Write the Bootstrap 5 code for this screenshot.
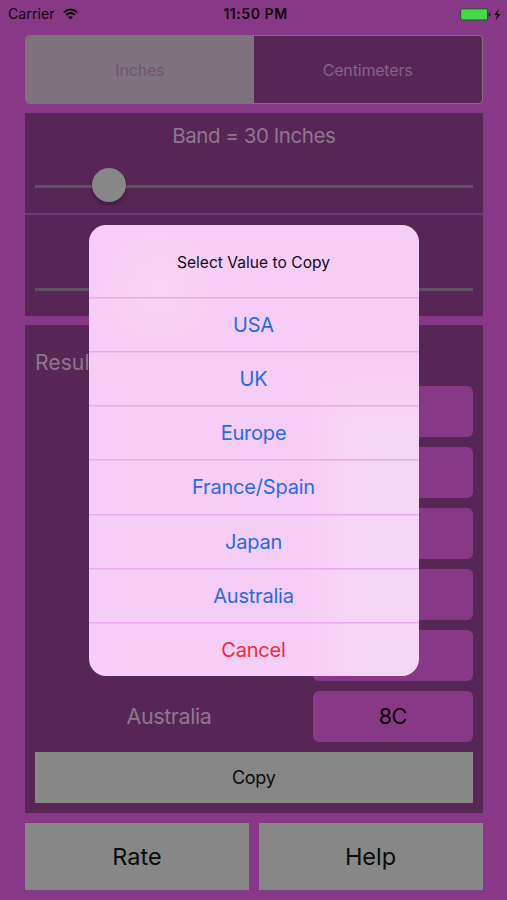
<!DOCTYPE html>
<html lang="en">
<head>
<meta charset="utf-8">
<meta name="viewport" content="width=device-width, initial-scale=1">
<title>Size Converter</title>
<link href="https://cdn.jsdelivr.net/npm/bootstrap@5.3.0/dist/css/bootstrap.min.css" rel="stylesheet">
<style>
  html, body { height: 900px; overflow: hidden; }
  body { background: #873886; font-family: Inter, "Liberation Sans", sans-serif; color: #8f768f; }
  .screen { height: 900px; }
  .status { height: 35px; padding: 0 6px 7px 8px; color: #10040f; font-size: 14.2px; line-height: 28px; }
  .status > div { flex: 1 1 0; }
  .clock { font-weight: 600; font-size: 14px; letter-spacing: .55px; padding-left: 2px; }
  .content { padding: 0 25px; width: 507.5px; }
  .segments { height: 69px; border: 1px solid #7e727f; border-radius: 4px; background: #582656; overflow: hidden; font-size: 16px; letter-spacing: -.18px; }
  .segments .chosen { background: #7e727f; color: #6f536f; }
  .segments .other { color: #846384; }
  .panel { background: #582656; }
  .measures { height: 203.5px; margin-top: 8.5px; }
  .measure { height: 100.5px; padding: 8px 10px 0; }
  .measure + .measure { border-top: 2px solid #76367a; height: 103px; }
  .measure-title { font-size: 20.5px; letter-spacing: -.45px; line-height: 30px; height: 30px; }
  .slide { height: 34px; margin-top: 17.5px; }
  .rail { height: 3px; background: #615262; margin-top: 3px; }
  .knob { width: 34px; height: 34px; border-radius: 50%; background: #868786; box-shadow: 0 3px 4px rgba(0,0,0,.3); margin-right: -34px; margin-left: 56.5px; z-index: 1; }
  .knob + .rail { margin-left: -56.5px; }
  .results { height: 487.5px; margin-top: 9px; padding: 21px 10px 9.5px 10px; }
  .results-title { font-size: 21.2px; line-height: 32px; height: 40px; }
  .result { height: 50.6px; margin-bottom: 10.4px; font-size: 21.5px; letter-spacing: -.4px; }
  .result-label { width: 278px; padding-right: 10px; }
  .result-value { width: 159.5px; border-radius: 6px; background: #873886; color: #0b020b; }
  .flat, .flat:hover { background: #868786; color: #0b0b0b; border: 0; border-radius: 0; padding: 0; }
  .copy { height: 51px; font-size: 18px; letter-spacing: -.3px; }
  .footer-row { height: 67.5px; margin-top: 10px; gap: 9.5px; }
  .footer-row .flat { font-size: 23.5px; flex: 1 1 0; }
  .dialog-layer { z-index: 5; padding-top: 1px; }
  .sheet { width: 330px; height: 451px; border-radius: 17px; overflow: hidden;
    background:
      radial-gradient(circle at 70px 62px, rgba(248,216,242,.8), rgba(248,216,242,0) 60px),
      linear-gradient(90deg, #f6cdf7 215px, rgba(246,205,247,0) 265px),
      linear-gradient(#f6cdf7 145px, #f7d6f5 200px); }
  .sheet-title { height: 72px; flex: none; color: #160717; font-size: 15.6px; padding-top: 3px; }
  .sheet .choice { height: 54.15px; background: transparent; color: #266bee; border: 0; box-shadow: inset 0 1.4px 0 #e9a9eb; font-size: 20px; letter-spacing: -.2px; padding: 2px 0 0; }
  .sheet .choice.stop { color: #f02a3b; }
</style>
<script src="https://cdn.jsdelivr.net/npm/bootstrap@5.3.0/dist/js/bootstrap.bundle.min.js"></script>
</head>
<body>
<div class="screen position-relative">
  <header class="status d-flex align-items-center">
    <div class="d-flex align-items-center"><span>Carrier</span>
      <svg class="ms-2" width="15" height="12" viewBox="0 0 15 12" fill="none" stroke="#10040f" stroke-width="2"><path d="M.8 4.4C4.7.6 10.3.6 14.2 4.4M3.2 7c2.6-2.4 6-2.4 8.6 0"/><path d="M7.5 11.6 5 9.1c1.5-1.3 3.5-1.3 5 0z" fill="#10040f" stroke="none"/></svg>
    </div>
    <span class="clock">11:50 PM</span>
    <div class="d-flex justify-content-end align-items-center">
      <svg width="41" height="13" viewBox="0 0 41 13"><rect x=".6" y=".8" width="27" height="11.2" rx="2" fill="#44d84b" stroke="#2b4a30"/><path d="M28.8 4.7c2.1.2 2.1 3.6 0 3.8z" fill="#24102a"/><path d="M38.8 1.2 34.3 7h3l-1.8 5.2L40.6 6h-3.1z" fill="#10040f"/></svg>
    </div>
  </header>

  <main class="content">
    <div class="segments d-flex">
      <div class="chosen w-50 d-flex align-items-center justify-content-center"><span>Inches</span></div>
      <div class="other w-50 d-flex align-items-center justify-content-center"><span>Centimeters</span></div>
    </div>

    <section class="panel measures">
      <div class="measure">
        <div class="measure-title text-center">Band = 30 Inches</div>
        <div class="slide d-flex align-items-center"><div class="knob flex-shrink-0"></div><div class="rail w-100"></div></div>
      </div>
      <div class="measure">
        <div class="measure-title"></div>
        <div class="slide d-flex align-items-center"><div class="rail w-100"></div></div>
      </div>
    </section>

    <section class="panel results">
      <div class="results-title">Results</div>
      <div class="result d-flex justify-content-end"><div class="result-value"></div></div>
      <div class="result d-flex justify-content-end"><div class="result-value"></div></div>
      <div class="result d-flex justify-content-end"><div class="result-value"></div></div>
      <div class="result d-flex justify-content-end"><div class="result-value"></div></div>
      <div class="result d-flex justify-content-end"><div class="result-value"></div></div>
      <div class="result d-flex justify-content-end">
        <div class="result-label d-flex align-items-center justify-content-center">Australia</div>
        <div class="result-value d-flex align-items-center justify-content-center">8C</div>
      </div>
      <button class="btn flat copy w-100 d-block">Copy</button>
    </section>

    <div class="footer-row d-flex">
      <button class="btn flat">Rate</button>
      <button class="btn flat">Help</button>
    </div>
  </main>

  <div class="dialog-layer position-absolute top-0 start-0 w-100 h-100 d-flex align-items-center justify-content-center">
    <div class="sheet d-flex flex-column" role="dialog">
      <div class="sheet-title d-flex align-items-center justify-content-center">Select Value to Copy</div>
      <button class="btn choice rounded-0">USA</button>
      <button class="btn choice rounded-0">UK</button>
      <button class="btn choice rounded-0">Europe</button>
      <button class="btn choice rounded-0">France/Spain</button>
      <button class="btn choice rounded-0">Japan</button>
      <button class="btn choice rounded-0">Australia</button>
      <button class="btn choice stop rounded-0">Cancel</button>
    </div>
  </div>
</div>
</body>
</html>
